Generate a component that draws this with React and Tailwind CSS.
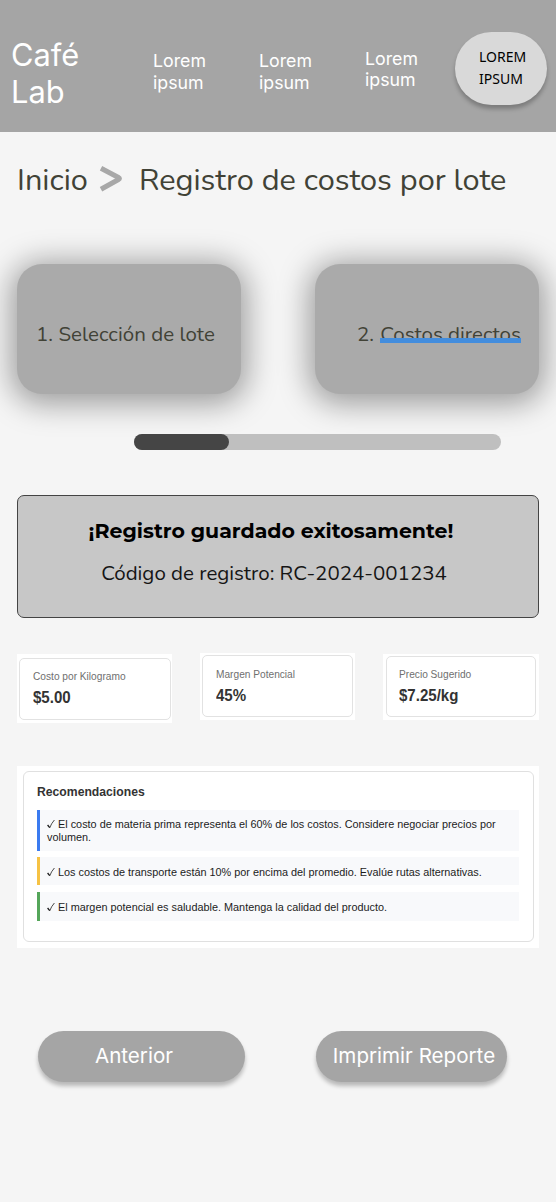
function Metric({ label, value, frame, card }) {
  return (
    <div className={`bg-white ${frame}`}>
      <div className={`h-full rounded-[5px] border border-[#e2e2e2] ${card}`}>
        <div className="origin-left scale-x-[0.95] text-[10.7px] leading-[14px] text-[#6f6f6f]">{label}</div>
        <div className="mt-[6px] origin-left scale-x-[0.94] text-[16px] font-bold leading-[18px] text-[#333]">{value}</div>
      </div>
    </div>
  );
}

function Tip({ children, className }) {
  return (
    <div className={`border-l-[3px] bg-[#f8f9fb] pl-[7px] text-[10.87px] leading-[12.5px] text-[#1c1c1c] ${className}`}>
      <svg className="mr-[3px] inline-block h-[10px] w-[8px] align-[-1px]" viewBox="0 0 8 10" fill="none" stroke="#1c1c1c">
        <path strokeWidth="1.3" d="M.6 6 2.7 8.7" />
        <path strokeWidth=".8" d="M2.7 8.9Q4.2 4.6 7.4 1" />
      </svg>
      {children}
    </div>
  );
}

function NavItem({ className }) {
  return (
    <a className={`w-[106px] shrink-0 font-['Inter',sans-serif] text-[17.75px] font-[370] leading-[21.7px] text-white ${className}`}>
      Lorem
      <br />
      ipsum
    </a>
  );
}

export default function App() {
  return (
    <main className="flex h-[1202px] w-[556px] flex-col overflow-hidden whitespace-nowrap bg-[#f5f5f5] font-['Liberation_Sans',sans-serif]">
      <header className="flex h-[132px] shrink-0 items-start bg-[#a5a5a5]">
        <div className="ml-[11px] w-[142px] shrink-0 pt-[36px] font-['Inter',sans-serif] text-[30.8px] font-[370] leading-[37px] text-white">
          Café
          <br />
          Lab
        </div>
        <NavItem className="pt-[50px]" />
        <NavItem className="pt-[50px]" />
        <NavItem className="-mr-[16.5px] pt-[47.5px]" />
        <button className="mt-[32px] h-[73px] w-[92px] shrink-0 rounded-[37px] bg-[#d9d9d9] pb-[2px] pl-[24.5px] text-left font-['Noto_Sans',sans-serif] text-[14px] leading-[21.7px] text-black shadow-[0_4px_4px_rgba(0,0,0,0.25)]">
          LOREM
          <br />
          IPSUM
        </button>
      </header>

      <nav className="flex h-[132px] shrink-0 pl-[17px] pt-[27px] font-['Nunito','Noto_Sans',sans-serif] text-[30.7px] leading-[42px] text-[#414236]">
        <span className="w-[82px]">Inicio</span>
        <svg className="mt-[6px] h-[28px] w-[25px]" viewBox="0 0 25 28" fill="none" stroke="#a8a8a8" strokeWidth="5">
          <path d="M2 3.2 19.5 12.5Q21.4 13.5 19.5 14.5L2 24.2" />
        </svg>
        <span className="ml-[15px]">Registro de costos por lote</span>
      </nav>

      <section className="flex h-[130px] shrink-0 justify-between px-[17px] font-['Nunito','Noto_Sans',sans-serif] text-[20.5px] font-[370] leading-[28px] text-[#414236]">
        <div className="h-[130px] w-[224px] rounded-[25px] bg-[#aaaaaa] pl-[19px] pt-[56px] tracking-[0.05px] shadow-[0_4px_30px_6px_rgba(0,0,0,0.36)]">
          1. Selección de lote
        </div>
        <div className="h-[130px] w-[224px] rounded-[25px] bg-[#aaaaaa] pl-[42px] pt-[56px] shadow-[0_4px_30px_6px_rgba(0,0,0,0.36)]">
          2. <span className="relative ml-[1px] inline-block">
            Costos directos
            <span className="absolute inset-x-0 top-[18px] h-[5px] bg-[#438ddd]" />
          </span>
        </div>
      </section>

      <div className="ml-[134px] mt-[40px] h-[16px] w-[367px] shrink-0 rounded-full bg-[#bfbfbf]">
        <div className="h-[15.5px] w-[95px] rounded-full bg-[#454545]" />
      </div>

      <section className="mx-[17px] mt-[45px] h-[123px] shrink-0 rounded-[7px] border-[1.5px] border-[#444] bg-[#c7c7c7] text-center">
        <h1 className="-ml-[14px] mt-[22px] font-['Montserrat','Inter',sans-serif] text-[20.5px] font-bold leading-[26px] text-black">
          ¡Registro guardado exitosamente!
        </h1>
        <p className="-ml-[8px] mt-[15px] font-['Nunito','Noto_Sans',sans-serif] text-[20.5px] font-[370] leading-[28px] text-[#151515]">
          Código de registro: RC-2024-001234
        </p>
      </section>

      <section className="mx-[17px] mt-[35px] flex h-[71px] shrink-0 items-start justify-between">
        <Metric label="Costo por Kilogramo" value="$5.00" frame="mt-[1px] h-[69px] w-[155px] pt-[4px] pb-[3px] pl-[2px] pr-[1px]" card="pl-[12.5px] pt-[10px]" />
        <Metric label="Margen Potencial" value="45%" frame="h-[67px] w-[155px] pt-[2px] pb-[3px] px-[2px]" card="pl-[12.5px] pt-[11px]" />
        <Metric label="Precio Sugerido" value="$7.25/kg" frame="mt-[1px] h-[66px] w-[156px] pt-[2px] pb-[3px] px-[3px]" card="pl-[12px] pt-[10px]" />
      </section>

      <section className="mx-[17px] mt-[42px] h-[182px] shrink-0 bg-white pb-[6px] pl-[6px] pr-[5px] pt-[5px]">
        <div className="h-full rounded-[6px] border border-[#e0e0e0] pl-[13px] pr-[14px] pt-[12px]">
          <h2 className="text-[12.2px] font-bold leading-[16px] text-[#333]">Recomendaciones</h2>
          <Tip className="mt-[10px] h-[41px] border-[#3b7bf0] pt-[8px]">
            El costo de materia prima representa el 60% de los costos. Considere negociar precios por
            <br />
            volumen.
          </Tip>
          <Tip className="mt-[6px] h-[28px] border-[#f6c244] pt-[9px]">
            Los costos de transporte están 10% por encima del promedio. Evalúe rutas alternativas.
          </Tip>
          <Tip className="mt-[7px] h-[29px] border-[#55a65a] pt-[9px]">
            El margen potencial es saludable. Mantenga la calidad del producto.
          </Tip>
        </div>
      </section>

      <footer className="mt-[83px] flex shrink-0 pl-[38px] font-['Inter',sans-serif] text-[20.6px] font-[370] leading-[25px] text-white">
        <button className="h-[51px] w-[207px] rounded-[26px] bg-[#a5a5a5] pb-[2px] pr-[15px] shadow-[0_4px_4px_rgba(0,0,0,0.25)]">Anterior</button>
        <button className="ml-[71px] h-[51px] w-[191px] rounded-[26px] bg-[#a5a5a5] pb-[2px] pl-[5px] shadow-[0_4px_4px_rgba(0,0,0,0.25)]">Imprimir Reporte</button>
      </footer>
    </main>
  );
}
